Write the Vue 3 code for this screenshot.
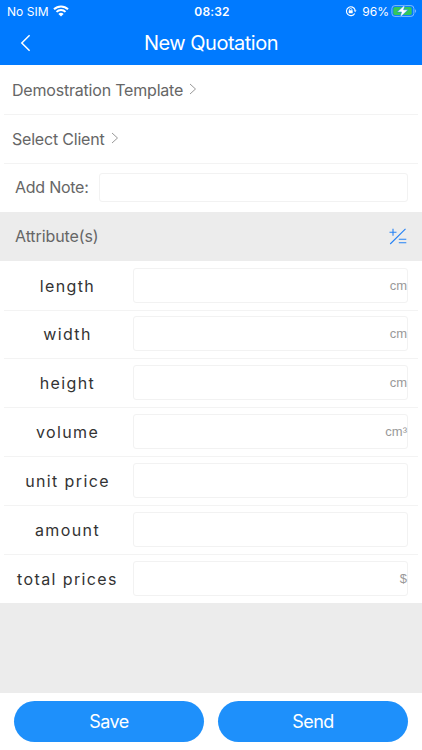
<script setup>
const attributes = [
  { name: 'length', unit: 'cm' },
  { name: 'width', unit: 'cm' },
  { name: 'height', unit: 'cm' },
  { name: 'volume', unit: 'cm³' },
  { name: 'unit price', unit: '' },
  { name: 'amount', unit: '' },
  { name: 'total prices', unit: '$' },
]
</script>

<template>
  <div class="screen">
    <header class="top">
      <div class="status">
        <div class="side">
          <span class="carrier">No SIM</span>
          <svg class="wifi" viewBox="0 0 16 12" width="16" height="12">
            <path d="M1 4.3a10 10 0 0 1 14 0" />
            <path d="M3.5 6.9a6.4 6.4 0 0 1 9 0" />
            <path class="dot" d="M8 11.5 5.4 9a3.7 3.7 0 0 1 5.2 0z" />
          </svg>
        </div>
        <span class="clock">08:32</span>
        <div class="side right">
          <svg class="lock" viewBox="0 0 12 12" width="12" height="12">
            <path d="M9.7 8.4A4.4 4.4 0 1 1 10.1 5" />
            <path class="solid" d="M8.7 5.3h2.8L10.1 7.2z" />
            <rect class="solid" x="3.7" y="5.3" width="4" height="3" rx=".4" />
            <path class="shackle" d="M4.5 5.5v-.8a1.2 1.2 0 0 1 2.4 0v.8" />
          </svg>
          <span class="percent">96%</span>
          <svg class="battery" viewBox="0 0 26 14" width="26" height="14">
            <rect class="shell" x=".9" y="1.6" width="22" height="10.8" rx="3" />
            <rect class="charge" x="2.3" y="3" width="18.4" height="8" rx="1.7" />
            <path class="cap" d="M24.1 5.2c1.4.4 1.4 3.2 0 3.6z" />
            <path class="bolt" d="M14.1.6 6.2 8h4.3L9 13.5l8-7.7h-4.4z" />
          </svg>
        </div>
      </div>
      <div class="nav">
        <svg class="back" viewBox="0 0 12 18" width="12" height="18">
          <path d="M9.6 1.2 1.8 9l7.8 7.8" />
        </svg>
        <h1>New Quotation</h1>
      </div>
    </header>

    <div class="row link">
      <span class="template">Demostration Template</span>
      <svg class="chevron" viewBox="0 0 8 12" width="8" height="12"><path d="m1 1 5.5 5L1 11" /></svg>
    </div>
    <div class="row link ruled">
      <span class="client">Select Client</span>
      <svg class="chevron" viewBox="0 0 8 12" width="8" height="12"><path d="m1 1 5.5 5L1 11" /></svg>
    </div>
    <div class="row note ruled">
      <span class="note-label">Add Note:</span>
      <div class="field note-field"></div>
    </div>
    <div class="row section">
      <span class="section-label">Attribute(s)</span>
      <svg class="calc" viewBox="0 0 18 17" width="18" height="17">
        <path d="M.5 4.2h7M4 .7v7M1.2 16 16.5.8M9.8 11.2h7.5M9.8 14.7h7.5" />
      </svg>
    </div>
    <div
      v-for="(item, index) in attributes"
      :key="item.name"
      class="row attribute"
      :class="{ ruled: index > 0 }"
    >
      <span class="name">{{ item.name }}</span>
      <div class="field value"><span>{{ item.unit }}</span></div>
    </div>

    <div class="filler"></div>
    <footer class="actions">
      <button type="button">Save</button>
      <button type="button">Send</button>
    </footer>
  </div>
</template>

<style>
body {
  background: #fff;
}
</style>

<style scoped>
.screen {
  width: 422px;
  height: 750px;
  display: flex;
  flex-direction: column;
  overflow: hidden;
  background: #ececec;
  color: #666;
  font-family: Inter, "Liberation Sans", sans-serif;
}
.top {
  flex: none;
  height: 65.3px;
  background: #007aff;
  color: #fff;
}
.status {
  height: 22px;
  padding: 0 5px 0 7px;
  display: grid;
  grid-template-columns: 1fr auto 1fr;
  align-items: center;
  font-size: 12px;
}
.side {
  display: flex;
  align-items: center;
}
.right {
  justify-content: flex-end;
}
.carrier {
  letter-spacing: 0.05px;
}
.wifi {
  margin: -1px 0 0 4px;
  fill: none;
  stroke: #fff;
  stroke-width: 2;
}
.wifi .dot {
  fill: #fff;
  stroke: none;
}
.clock {
  font-weight: 600;
  letter-spacing: 0.15px;
}
.lock {
  fill: none;
  stroke: #fff;
  stroke-width: 1.1;
}
.lock .solid {
  fill: #fff;
  stroke: none;
}
.lock .shackle {
  stroke-width: 0.8;
}
.percent {
  margin: 0 2px 0 5px;
}
.shell {
  fill: none;
  stroke: #7fbcff;
}
.charge {
  fill: #35c759;
}
.cap {
  fill: #7fbcff;
}
.bolt {
  fill: #fff;
  stroke: #007aff;
  stroke-width: 0.5;
}
.nav {
  height: 42px;
  padding: 0 20px;
  display: grid;
  grid-template-columns: 12px 1fr 12px;
  align-items: center;
}
.back,
.chevron,
.calc {
  fill: none;
  stroke: #fff;
  stroke-width: 1.5;
}
h1 {
  margin: 0;
  padding-bottom: 1px;
  font-size: 20px;
  font-weight: 400;
  line-height: 24px;
  letter-spacing: -0.5px;
  text-align: center;
}
.row {
  flex: none;
  height: 48.85px;
  box-sizing: border-box;
  display: flex;
  align-items: center;
  background-color: #fff;
  font-size: 16px;
  white-space: nowrap;
}
.ruled {
  background-image: linear-gradient(#f3f3f3, #f3f3f3);
  background-position: 4px 0;
  background-size: calc(100% - 8px) 1px;
  background-repeat: no-repeat;
}
.link {
  padding-left: 12px;
  letter-spacing: -0.2px;
}
.chevron {
  margin: -2px 0 0 6px;
  stroke: #999;
  stroke-width: 1;
}
.note,
.section {
  padding: 0 14px 0 15px;
}
.note-label {
  width: 84px;
  letter-spacing: -0.25px;
}
.section-label {
  letter-spacing: -0.1px;
}
.field {
  box-sizing: border-box;
  border: 1px solid #f2f2f2;
  border-radius: 3px;
  background: #fff;
}
.note-field {
  flex: 1;
  height: 29px;
}
.section {
  justify-content: space-between;
  background: #ececec;
}
.calc {
  margin-right: 1px;
  stroke: #2582f5;
  stroke-width: 1.1;
}
.attribute {
  padding-right: 14px;
  color: #333;
}
.name {
  width: 133px;
  box-sizing: border-box;
  padding: 1px 0 0 2px;
  letter-spacing: 1.38px;
  text-align: center;
}
.value {
  flex: 1;
  height: 35px;
  display: flex;
  align-items: center;
  justify-content: flex-end;
  color: #999;
  font-family: "Liberation Sans", sans-serif;
  font-size: 13px;
}
.filler {
  flex: 1;
}
.actions {
  flex: none;
  height: 57px;
  box-sizing: border-box;
  padding: 8px 14px;
  display: grid;
  grid-template-columns: 190px 190px;
  gap: 14px;
  background: #fff;
}
button {
  height: 41px;
  padding: 0;
  border: 0;
  border-radius: 21px;
  background: #1e90fb;
  color: #fff;
  font: 400 18px Inter, sans-serif;
  letter-spacing: -0.6px;
}
</style>
